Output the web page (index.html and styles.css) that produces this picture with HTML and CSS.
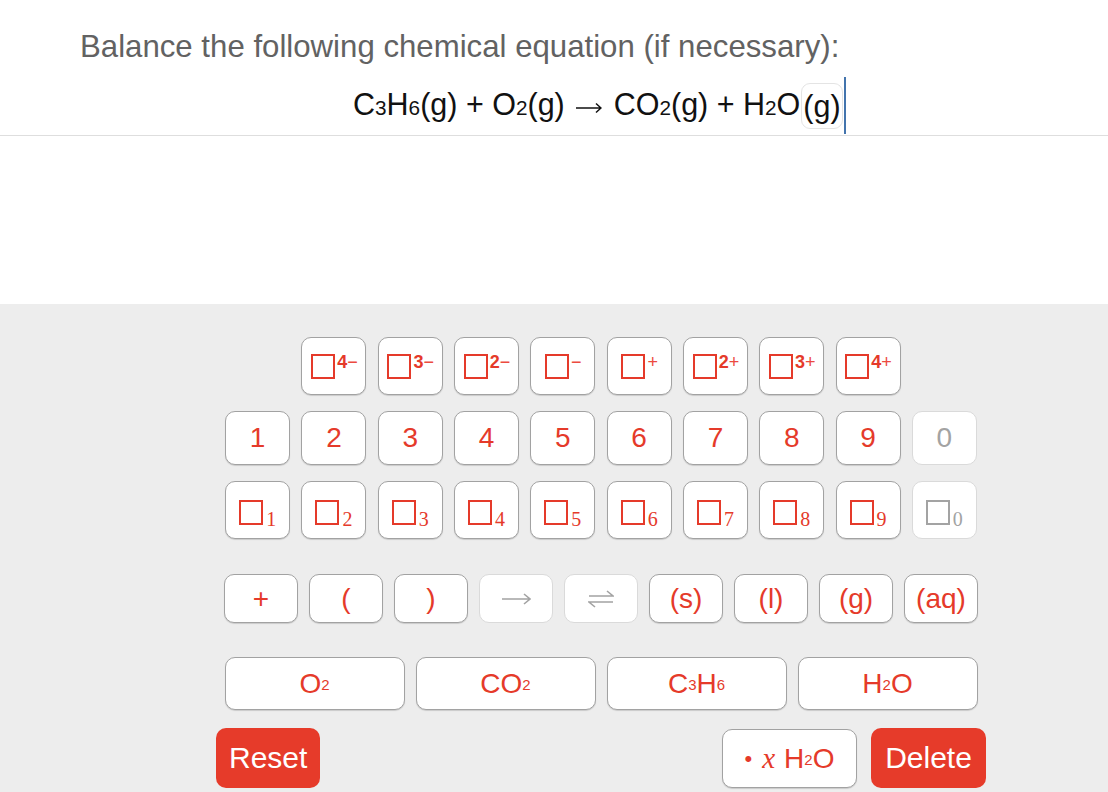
FILE: index.html
```html
<!DOCTYPE html>
<html>
<head>
<meta charset="utf-8">
<link rel="stylesheet" href="styles.css">
</head>
<body>
<div class="question">
  <h1 class="prompt">Balance the following chemical equation (if necessary):</h1>
  <div class="eq">
    <span class="eq-text">C<span class="esub">3</span>H<span class="esub">6</span>(g) + O<span class="esub">2</span>(g) <svg class="arr" width="26" height="12" viewBox="0 0 26 12"><path d="M0 6H25M20 1.5L25 6L20 10.5" fill="none" stroke="#111" stroke-width="1.5"/></svg> CO<span class="esub">2</span>(g) + H<span class="esub">2</span>O</span><span class="eq-sel">(g)</span><span class="cursor"></span>
  </div>
</div>
<div class="answer-space"></div>
<div class="keypad">
  <div class="pad">
    <div class="row row-charge">
      <div class="key k65 h58"><span class="chg"><span class="box"></span><span class="sup">4<span class="thin">−</span></span></span></div>
      <div class="key k65 h58"><span class="chg"><span class="box"></span><span class="sup">3<span class="thin">−</span></span></span></div>
      <div class="key k65 h58"><span class="chg"><span class="box"></span><span class="sup">2<span class="thin">−</span></span></span></div>
      <div class="key k65 h58"><span class="chg"><span class="box"></span><span class="sup"><span class="thin">−</span></span></span></div>
      <div class="key k65 h58"><span class="chg"><span class="box"></span><span class="sup"><span class="thin">+</span></span></span></div>
      <div class="key k65 h58"><span class="chg"><span class="box"></span><span class="sup">2<span class="thin">+</span></span></span></div>
      <div class="key k65 h58"><span class="chg"><span class="box"></span><span class="sup">3<span class="thin">+</span></span></span></div>
      <div class="key k65 h58"><span class="chg"><span class="box"></span><span class="sup">4<span class="thin">+</span></span></span></div>
    </div>
    <div class="row row-digit">
      <div class="key k65 h54 big">1</div>
      <div class="key k65 h54 big">2</div>
      <div class="key k65 h54 big">3</div>
      <div class="key k65 h54 big">4</div>
      <div class="key k65 h54 big">5</div>
      <div class="key k65 h54 big">6</div>
      <div class="key k65 h54 big">7</div>
      <div class="key k65 h54 big">8</div>
      <div class="key k65 h54 big">9</div>
      <div class="key k65 h54 big off">0</div>
    </div>
    <div class="row row-sub">
      <div class="key k65 h58"><span class="subk"><span class="box"></span><span class="sdig">1</span></span></div>
      <div class="key k65 h58"><span class="subk"><span class="box"></span><span class="sdig">2</span></span></div>
      <div class="key k65 h58"><span class="subk"><span class="box"></span><span class="sdig">3</span></span></div>
      <div class="key k65 h58"><span class="subk"><span class="box"></span><span class="sdig">4</span></span></div>
      <div class="key k65 h58"><span class="subk"><span class="box"></span><span class="sdig">5</span></span></div>
      <div class="key k65 h58"><span class="subk"><span class="box"></span><span class="sdig">6</span></span></div>
      <div class="key k65 h58"><span class="subk"><span class="box"></span><span class="sdig">7</span></span></div>
      <div class="key k65 h58"><span class="subk"><span class="box"></span><span class="sdig">8</span></span></div>
      <div class="key k65 h58"><span class="subk"><span class="box"></span><span class="sdig">9</span></span></div>
      <div class="key k65 h58 off"><span class="subk"><span class="box"></span><span class="sdig">0</span></span></div>
    </div>
    <div class="row row-sym">
      <div class="key k74 h49 big">+</div>
      <div class="key k74 h49 big">(</div>
      <div class="key k74 h49 big">)</div>
      <div class="key k74 h49 off">
        <svg width="30" height="14" viewBox="0 0 30 14"><path d="M1 7H29M23 2L29 7L23 12" fill="none" stroke="#a3a3a3" stroke-width="1.6"/></svg>
      </div>
      <div class="key k74 h49 off">
        <svg width="26" height="18" viewBox="0 0 26 18"><path d="M1 6H25L19 1M25 12H1L7 17" fill="none" stroke="#a3a3a3" stroke-width="1.6"/></svg>
      </div>
      <div class="key k74 h49 big">(s)</div>
      <div class="key k74 h49 big">(l)</div>
      <div class="key k74 h49 big">(g)</div>
      <div class="key k74 h49 big">(aq)</div>
    </div>
    <div class="row row-chem">
      <div class="key k180 h53 big">O<span class="ksub">2</span></div>
      <div class="key k180 h53 big">CO<span class="ksub">2</span></div>
      <div class="key k180 h53 big">C<span class="ksub">3</span>H<span class="ksub">6</span></div>
      <div class="key k180 h53 big">H<span class="ksub">2</span>O</div>
    </div>
    <div class="row row-actions">
      <div class="act">Reset</div>
      <div class="act-group">
        <div class="key hyd big"><span class="dot">•</span><span class="xvar">x</span>H<span class="ksub">2</span>O</div>
        <div class="act del">Delete</div>
      </div>
    </div>
  </div>
</div>
</body>
</html>
```
FILE: styles.css
```css
html, body {
  margin: 0;
  padding: 0;
  background: #ffffff;
  font-family: "Liberation Sans", Arial, sans-serif;
}

.question {
  padding-top: 29px;
  padding-bottom: 1px;
  border-bottom: 1px solid #dedede;
}

.prompt {
  margin: 0 0 0 80px;
  font-size: 31.2px;
  font-weight: normal;
  color: #626262;
  line-height: 35px;
}

.eq {
  display: flex;
  align-items: center;
  height: 57px;
  margin-top: 13px;
  padding-left: 353px;
  color: #111111;
  font-size: 30.5px;
}

.eq-text {
  line-height: 30px;
  white-space: pre;
}

.esub {
  font-size: 0.68em;
}

.arr {
  vertical-align: 1px;
  margin: 0 3px;
}

.eq-sel {
  display: inline-block;
  line-height: 44px;
  padding: 0 1px;
  border: 1px solid #e4e4e4;
  border-radius: 9px;
  margin-left: 1px;
}

.cursor {
  width: 2px;
  height: 57px;
  background: #4374ad;
  margin-left: 1px;
}

.answer-space {
  height: 168px;
}

.keypad {
  background: #ededed;
  padding-top: 33px;
  padding-bottom: 20px;
}

.pad {
  width: 754px;
  margin-left: 224px;
}

.row {
  display: flex;
  justify-content: center;
  gap: 11.3px;
}

.row-digit { margin-top: 16px; }
.row-sub { margin-top: 16px; }
.row-sym { margin-top: 35px; gap: 11px; }
.row-chem { margin-top: 34px; gap: 11px; }
.row-actions {
  margin: 18px -8px 0 -8px;
  justify-content: space-between;
}

.key {
  box-sizing: border-box;
  display: flex;
  align-items: center;
  justify-content: center;
  background: #ffffff;
  border: 1px solid #a2a2a2;
  border-radius: 10px;
  box-shadow: 0 1px 1px rgba(0, 0, 0, 0.15);
  color: #e53a2a;
}

.key.off {
  border-color: #dadada;
  box-shadow: none;
  color: #a3a3a3;
}

.k65 { width: 65px; }
.k74 { width: 74px; }
.k180 { width: 180px; }
.h58 { height: 58px; }
.h54 { height: 54px; }
.h49 { height: 49px; }
.h53 { height: 53px; }

.big {
  font-size: 28px;
  line-height: 1;
}

.box {
  display: inline-block;
  box-sizing: border-box;
  width: 24px;
  height: 25px;
  border: 2.5px solid currentColor;
}

.chg {
  display: inline-flex;
  align-items: flex-start;
  margin-left: 1px;
}

.sup {
  font-size: 18px;
  font-weight: bold;
  line-height: 1;
  margin-top: -1px;
  margin-left: 2px;
}

.thin {
  font-weight: normal;
  color: #ec4a40;
}

.subk {
  display: inline-flex;
  align-items: flex-end;
  margin-top: 4px;
}

.sdig {
  font-family: "Liberation Serif", "Times New Roman", serif;
  font-size: 20px;
  line-height: 1;
  margin-left: 3px;
  margin-bottom: -4px;
}

.ksub {
  font-size: 15px;
  position: relative;
  top: 1px;
}

.act {
  box-sizing: border-box;
  height: 60px;
  padding: 0 13px;
  display: flex;
  align-items: center;
  background: #e63b2a;
  color: #ffffff;
  border-radius: 10px;
  font-size: 30px;
}

.act-group {
  display: flex;
  gap: 14px;
}

.hyd {
  width: 135px;
  height: 59px;
  margin-top: 1px;
}

.dot {
  font-size: 22px;
  margin-right: 10px;
}

.xvar {
  font-family: "Liberation Serif", "Times New Roman", serif;
  font-style: italic;
  font-size: 29px;
  margin-right: 9px;
}

.del {
  width: 115px;
  justify-content: center;
  padding: 0;
}
```
